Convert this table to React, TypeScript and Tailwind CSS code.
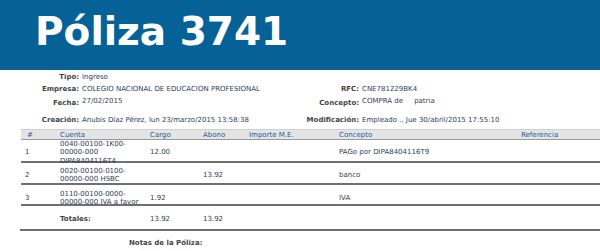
const rows = [
  {
    n: "1",
    cuenta: "0040-00100-1K00-00000-000 DIPA8404116T4",
    cargo: "12.00",
    abono: "",
    concepto: "PAGo por DIPA8404116T9",
    box: "h-[23px] pt-0",
  },
  {
    n: "2",
    cuenta: "0020-00100-0100-00000-000 HSBC",
    cargo: "",
    abono: "13.92",
    concepto: "banco",
    box: "h-[22px] pt-[4px]",
  },
  {
    n: "3",
    cuenta: "0110-00100-0000-00000-000 IVA a favor",
    cargo: "1.92",
    abono: "",
    concepto: "IVA",
    box: "h-[21px] pt-[5px]",
  },
];

const cols = "grid grid-cols-[39px_90px_53px_46px_90px_182px_1fr]";

export default function App() {
  return (
    <div className="w-[600px] h-[251px] overflow-hidden bg-white font-['DejaVu_Sans',Verdana,sans-serif] text-[7px] text-[#2f3e55]">
      <div className="h-[70px] bg-[#066296] pt-[12px] pl-[35px]">
        <h1 className="text-[39px] leading-none font-bold text-white">Póliza 3741</h1>
      </div>

      <div className="mt-[1px] grid grid-cols-[79px_201px_79px_1fr] leading-[12px]">
        <div className="text-right font-bold text-[#444]">Tipo:</div>
        <div className="pl-[3px]">Ingreso</div>
        <div />
        <div />

        <div className="text-right font-bold text-[#444]">Empresa:</div>
        <div className="pl-[3px] whitespace-nowrap">COLEGIO NACIONAL DE EDUCACION PROFESIONAL</div>
        <div className="text-right font-bold text-[#444]">RFC:</div>
        <div className="pl-[3px]">CNE781229BK4</div>

        <div className="text-right font-bold text-[#444] pt-[2px]">Fecha:</div>
        <div className="pl-[3px]">27/02/2015</div>
        <div className="text-right font-bold text-[#444] pt-[2px]">Concepto:</div>
        <div className="pl-[3px] whitespace-pre">COMPRA de     patria</div>

        <div className="mt-[5px] text-right font-bold text-[#444]">Creación:</div>
        <div className="mt-[5px] pl-[3px] whitespace-nowrap">Anubis Díaz Pérez, lun 23/marzo/2015 13:58:38</div>
        <div className="mt-[5px] text-right font-bold text-[#444]">Modificación:</div>
        <div className="mt-[5px] pl-[3px] whitespace-nowrap">Empleado ., Jue 30/abril/2015 17:55:10</div>
      </div>

      <div className="ml-[21px] mt-[3px]">
        <div className={`${cols} h-[11px] items-center bg-[#e4e4e4] border-t border-t-[#d0d0d0] border-b border-b-[#9a9a9a] text-[#1c5e9e]`}>
          <div className="pl-[6px]">#</div>
          <div>Cuenta</div>
          <div>Cargo</div>
          <div>Abono</div>
          <div>Importe M.E.</div>
          <div>Concepto</div>
          <div>Referencia</div>
        </div>

        {rows.map((r) => (
          <div key={r.n} className={`${cols} ${r.box} items-center border-b-2 border-[#707070]`}>
            <div className="pl-[4px]">{r.n}</div>
            <div className="w-[80px] leading-[8.3px]">{r.cuenta}</div>
            <div>{r.cargo}</div>
            <div>{r.abono}</div>
            <div />
            <div>{r.concepto}</div>
            <div />
          </div>
        ))}

        <div className={`${cols} -ml-[1px] h-[25px] pt-[4px] items-center border-b-2 border-[#707070]`}>
          <div />
          <div className="pl-[1px] font-bold text-[#444]">Totales:</div>
          <div className="pl-[1px]">13.92</div>
          <div className="pl-[1px]">13.92</div>
          <div />
          <div />
          <div />
        </div>
      </div>

      <div className="mt-[6px] pl-[129px] leading-[12px] font-bold text-[#444]">Notas de la Póliza:</div>
    </div>
  );
}
